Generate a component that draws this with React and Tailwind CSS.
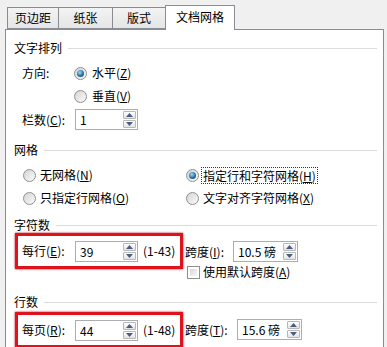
import React from "react";

const FONT = { fontFamily: '"Noto Sans CJK SC", "Noto Sans", sans-serif' };

/* ======================================================
   SMALL CONTROLS
   ====================================================== */
function Arrow({ up }) {
  return (
    <svg width="7" height="4" viewBox="0 0 7 4">
      <path d={up ? "M0 4 L3.5 0 L7 4 Z" : "M0 0 L7 0 L3.5 4 Z"} fill="#4a5d7e" />
    </svg>
  );
}

function Spin({ w, value }) {
  return (
    <div className={`${w} h-[21px] flex border border-[#abadb3] bg-white`}>
      <div className="flex-1 pl-[4px] leading-[19px] text-[12px] text-black">{value}</div>
      <div className="w-[15px] flex flex-col gap-px p-px">
        <div className="flex-1 flex items-center justify-center border border-[#b7b7b7] rounded-[1px] bg-gradient-to-b from-white to-[#e3e3e3]">
          <Arrow up />
        </div>
        <div className="flex-1 flex items-center justify-center border border-[#b7b7b7] rounded-[1px] bg-gradient-to-b from-white to-[#e3e3e3]">
          <Arrow />
        </div>
      </div>
    </div>
  );
}

function Radio({ on }) {
  return (
    <span className="w-[13px] h-[13px] shrink-0 rounded-full border border-[#8e8f8f] bg-gradient-to-br from-[#d4d4d4] to-[#fbfbfb] flex items-center justify-center">
      {on && (
        <span className="w-[7px] h-[7px] rounded-full bg-[radial-gradient(circle_at_40%_35%,#9fdcf8,#2a6f9e_55%,#0f3f66)]" />
      )}
    </span>
  );
}

function Check() {
  return (
    <span className="w-[13px] h-[13px] shrink-0 border border-[#8e8f8f] p-[2px] bg-white">
      <span className="block w-full h-full bg-gradient-to-br from-[#d8d8d8] to-[#f6f6f6]" />
    </span>
  );
}

function Group({ title }) {
  return (
    <div className="flex items-center h-[16px] pl-[8px] pr-[6px]">
      <span>{title}</span>
      <div className="flex-1 h-px bg-[#dcdcdc] ml-[6px]" />
    </div>
  );
}

function Tab({ label, w }) {
  return (
    <div
      className={`${w} h-[22px] flex items-center justify-center border border-r-0 border-[#898c95] bg-gradient-to-b from-[#f3f3f3] to-[#e5e5e5]`}
    >
      {label}
    </div>
  );
}

/* ======================================================
   DIALOG
   ====================================================== */
export default function App() {
  return (
    <div style={FONT} className="w-[387px] h-[347px] overflow-hidden bg-[#f0f0f0] text-[12px] leading-[16px] text-black">
      {/* TABS */}
      <div className="flex items-end pl-[7px] pt-[5px] h-[29px]">
        <Tab label="页边距" w="w-[51px]" />
        <Tab label="纸张" w="w-[54px]" />
        <Tab label="版式" w="w-[53px]" />
        <div className="w-[70px] h-[25px] flex items-start justify-center pt-[3px] border border-b-0 border-[#898c95] bg-white -mb-px relative z-10">
          文档网格
        </div>
      </div>

      {/* PANEL */}
      <div className="ml-[5px] w-[379px] h-[330px] border border-[#898c95] bg-white">
        <div className="pt-[10px]">
          <Group title="文字排列" />
        </div>

        <div className="flex items-center h-[16px] mt-[9px] pl-[16px]">
          <span className="w-[52px]">方向:</span>
          <Radio on />
          <span className="ml-[5px]">
            水平(<u>Z</u>)
          </span>
        </div>
        <div className="flex items-center h-[16px] mt-[7px] pl-[68px]">
          <Radio />
          <span className="ml-[5px]">
            垂直(<u>V</u>)
          </span>
        </div>
        <div className="flex items-center h-[21px] mt-[5px] pl-[16px]">
          <span className="w-[53px]">
            栏数(<u>C</u>):
          </span>
          <Spin w="w-[63px]" value="1" />
        </div>

        <div className="mt-[12px]">
          <Group title="网格" />
        </div>
        <div className="flex items-center h-[16px] mt-[9px] pl-[17px]">
          <div className="w-[163px] flex items-center">
            <Radio />
            <span className="ml-[4px]">
              无网格(<u>N</u>)
            </span>
          </div>
          <Radio on />
          <span className="ml-[3px] px-px outline-1 outline-dotted outline-[#333] leading-[15px]">
            指定行和字符网格(<u>H</u>)
          </span>
        </div>
        <div className="flex items-center h-[16px] mt-[7px] pl-[17px]">
          <div className="w-[163px] flex items-center">
            <Radio />
            <span className="ml-[4px]">
              只指定行网格(<u>O</u>)
            </span>
          </div>
          <Radio />
          <span className="ml-[4px]">
            文字对齐字符网格(<u>X</u>)
          </span>
        </div>

        <div className="mt-[11px]">
          <Group title="字符数" />
        </div>
        <div className="flex items-start pl-[9px]">
          <div className="w-[168px] h-[36px] border-[3px] border-[#e0121c] shadow-[0_0_2px_#b0101a] flex items-center pl-[4px]">
            <span className="w-[53px]">
              每行(<u>E</u>):
            </span>
            <Spin w="w-[63px]" value="39" />
            <span className="ml-[5px]">(1-43)</span>
          </div>
          <div className="ml-[2px] mt-[8px] flex flex-col">
            <div className="flex items-center h-[21px]">
              <span className="w-[48px]">
                跨度(<u>I</u>):
              </span>
              <Spin w="w-[65px]" value="10.5 磅" />
            </div>
            <div className="flex items-center h-[14px] mt-[3px] pl-[2px]">
              <Check />
              <span className="ml-[3px]">
                使用默认跨度(<u>A</u>)
              </span>
            </div>
          </div>
        </div>

        <div className="mt-[15px]">
          <Group title="行数" />
        </div>
        <div className="flex items-start pl-[9px] mt-[2px]">
          <div className="w-[168px] h-[36px] border-[3px] border-[#e0121c] shadow-[0_0_2px_#b0101a] flex items-center pl-[4px]">
            <span className="w-[53px]">
              每页(<u>R</u>):
            </span>
            <Spin w="w-[63px]" value="44" />
            <span className="ml-[5px]">(1-48)</span>
          </div>
          <div className="ml-[2px] mt-[7px] flex items-center h-[21px]">
            <span className="w-[52px]">
              跨度(<u>T</u>):
            </span>
            <Spin w="w-[65px]" value="15.6 磅" />
          </div>
        </div>
      </div>
    </div>
  );
}
